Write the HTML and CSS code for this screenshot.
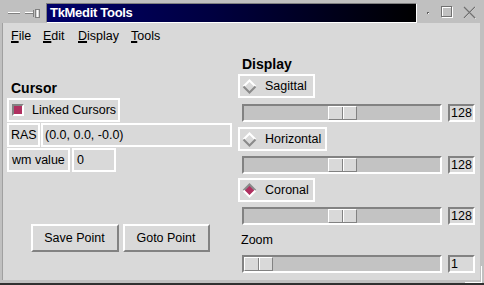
FILE: index.html
```html
<!DOCTYPE html>
<html>
<head>
<meta charset="utf-8">
<link rel="stylesheet" href="styles.css">
</head>
<body>
<div class="window">
  <div class="titlebar">
    <svg class="tb-left" width="46" height="23" viewBox="0 0 46 23">
      <line x1="8" y1="12.5" x2="20" y2="12.5" stroke="#ffffff" stroke-width="1"/>
      <line x1="8" y1="13.5" x2="20" y2="13.5" stroke="#808080" stroke-width="1"/>
      <line x1="25" y1="12.5" x2="33" y2="12.5" stroke="#ffffff" stroke-width="1"/>
      <line x1="25" y1="13.5" x2="33" y2="13.5" stroke="#808080" stroke-width="1"/>
      <line x1="33.5" y1="10" x2="33.5" y2="17" stroke="#808080" stroke-width="1"/>
      <rect x="35.5" y="9.5" width="4" height="8" fill="#d8d8d8" stroke="#808080" stroke-width="1"/>
      <line x1="37.5" y1="10" x2="37.5" y2="17" stroke="#ffffff" stroke-width="1"/>
    </svg>
    <div class="title">TkMedit Tools</div>
    <svg class="tb-right" width="67" height="23" viewBox="0 0 67 23">
      <rect x="10" y="12" width="2" height="2" fill="#606060"/>
      <rect x="11" y="13" width="1" height="1" fill="#ffffff"/>
      <rect x="25.5" y="7.5" width="10" height="10" fill="none" stroke="#ffffff" stroke-width="1"/>
      <rect x="24.5" y="6.5" width="10" height="10" fill="none" stroke="#707070" stroke-width="1"/>
      <path d="M47.5 7.5 L58.5 18.5 M58.5 7.5 L47.5 18.5" stroke="#ffffff" stroke-width="1"/>
      <path d="M47 7 L58 18 M58 7 L47 18" stroke="#707070" stroke-width="1.2"/>
    </svg>
  </div>
  <div class="client">
    <div class="menubar">
      <span class="menu"><span class="ul">F</span>ile</span>
      <span class="menu"><span class="ul">E</span>dit</span>
      <span class="menu"><span class="ul">D</span>isplay</span>
      <span class="menu"><span class="ul">T</span>ools</span>
    </div>
    <div class="main">
      <div class="left">
        <div class="heading cursor-head">Cursor</div>
        <div class="frame linked"><span class="check"></span><span class="check-label">Linked Cursors</span></div>
        <div class="row">
          <div class="frame f-ras">RAS</div>
          <div class="frame f-rasval">(0.0, 0.0, -0.0)</div>
        </div>
        <div class="row">
          <div class="frame f-wm">wm value</div>
          <div class="frame f-wmval">0</div>
        </div>
        <div class="buttons">
          <div class="btn btn-save">Save Point</div>
          <div class="btn btn-goto">Goto Point</div>
        </div>
      </div>
      <div class="right">
        <div class="heading display-head">Display</div>
        <div class="frame radio r-sag">
          <svg class="diamond" width="15" height="15" viewBox="0 0 15 15">
            <path d="M1.5 7.5 L7.5 1.5 L13.5 7.5" fill="none" stroke="#ffffff" stroke-width="2"/>
            <path d="M1.5 7.5 L7.5 13.5 L13.5 7.5" fill="none" stroke="#8a8a8a" stroke-width="2"/>
          </svg>
          <span>Sagittal</span>
        </div>
        <div class="slider-row">
          <div class="trough"><div class="thumb" style="margin-left:84px"></div></div>
          <div class="value">128</div>
        </div>
        <div class="frame radio r-hor">
          <svg class="diamond" width="15" height="15" viewBox="0 0 15 15">
            <path d="M1.5 7.5 L7.5 1.5 L13.5 7.5" fill="none" stroke="#ffffff" stroke-width="2"/>
            <path d="M1.5 7.5 L7.5 13.5 L13.5 7.5" fill="none" stroke="#8a8a8a" stroke-width="2"/>
          </svg>
          <span>Horizontal</span>
        </div>
        <div class="slider-row">
          <div class="trough"><div class="thumb" style="margin-left:84px"></div></div>
          <div class="value">128</div>
        </div>
        <div class="frame radio r-cor">
          <svg class="diamond" width="15" height="15" viewBox="0 0 15 15">
            <path d="M7.5 1.5 L13.5 7.5 L7.5 13.5 L1.5 7.5 Z" fill="#b03060"/>
            <path d="M1.5 7.5 L7.5 1.5 L13.5 7.5" fill="none" stroke="#8a8a8a" stroke-width="2"/>
            <path d="M1.5 7.5 L7.5 13.5 L13.5 7.5" fill="none" stroke="#ffffff" stroke-width="2"/>
          </svg>
          <span>Coronal</span>
        </div>
        <div class="slider-row">
          <div class="trough"><div class="thumb" style="margin-left:84px"></div></div>
          <div class="value">128</div>
        </div>
        <div class="zoom-label">Zoom</div>
        <div class="slider-row">
          <div class="trough"><div class="thumb" style="margin-left:0px"></div></div>
          <div class="value">1</div>
        </div>
      </div>
    </div>
  </div>
  <div class="grip"></div>
</div>
</body>
</html>
```

FILE: styles.css
```css
html, body {
  margin: 0;
  padding: 0;
  background: #c0c0c0;
}

.window {
  position: relative;
  width: 484px;
  height: 285px;
  background: #c0c0c0;
  display: flex;
  flex-direction: column;
  font-family: "Liberation Sans", Arial, sans-serif;
  font-size: 12.5px;
  line-height: 15px;
  color: #000;
  overflow: hidden;
}

/* ---------- title bar ---------- */
.titlebar {
  height: 23px;
  display: flex;
  align-items: flex-start;
  flex: none;
}

.tb-left, .tb-right {
  display: block;
  flex: none;
}

.title {
  margin-top: 3px;
  width: 371px;
  height: 20px;
  box-sizing: border-box;
  border: 1px solid;
  border-color: #808080 #ffffff #ffffff #808080;
  background: linear-gradient(to right, #00006a 0%, #000040 45%, #000000 100%);
  color: #ffffff;
  font-weight: bold;
  font-size: 13px;
  letter-spacing: -0.3px;
  line-height: 18px;
  padding-left: 3px;
  flex: none;
}

/* ---------- client area ---------- */
.client {
  flex: none;
  height: 257px;
  margin: 0 4px 0 2px;
  border-left: 1px solid #a0a0a0;
  background: #d9d9d9;
  display: flex;
  flex-direction: column;
}

.menubar {
  height: 25px;
  box-sizing: border-box;
  padding: 6px 0 0 8px;
  display: grid;
  grid-template-columns: 32px 35px 53px auto;
  flex: none;
}

.ul {
  text-decoration: underline;
  text-decoration-thickness: 2px;
  text-underline-offset: 1px;
}

.main {
  display: flex;
  align-items: flex-start;
}

.left {
  width: 225px;
  margin-left: 4px;
  display: flex;
  flex-direction: column;
}

.right {
  width: 237px;
  margin-left: 6px;
  display: flex;
  flex-direction: column;
}

.heading {
  font-weight: bold;
  font-size: 14px;
  line-height: 16px;
}

.cursor-head {
  margin-top: 32px;
  padding-left: 4px;
}

.display-head {
  margin-top: 8px;
  padding-left: 4px;
}

.frame {
  box-sizing: border-box;
  height: 24px;
  border: 2px solid #ffffff;
  display: flex;
  align-items: center;
}

.linked {
  width: 113px;
  margin-top: 2px;
}

.check {
  width: 12px;
  height: 12px;
  box-sizing: border-box;
  margin-left: 3px;
  border: 2px solid;
  border-color: #828282 #ffffff #ffffff #828282;
  background: #b03060;
  flex: none;
}

.check-label {
  margin-left: 8px;
}

.row {
  display: flex;
  margin-top: 1px;
}

.f-ras {
  width: 33px;
  padding-left: 2px;
}

.f-rasval {
  width: 191px;
  margin-left: 1px;
  padding-left: 2px;
}

.f-wm {
  width: 63px;
  padding-left: 3px;
}

.f-wmval {
  width: 44px;
  margin-left: 2px;
  padding-left: 3px;
}

.buttons {
  margin-top: 52px;
  display: flex;
  justify-content: center;
  gap: 4px;
  padding-left: 1px;
}

.btn {
  box-sizing: border-box;
  height: 28px;
  border: 2px solid;
  border-color: #ffffff #828282 #828282 #ffffff;
  background: #d9d9d9;
  display: flex;
  align-items: center;
  justify-content: center;
}

.btn-save { width: 88px; }
.btn-goto { width: 87px; }

/* ---------- display column ---------- */
.radio {
  margin-top: 2px;
  gap: 8px;
}

.r-sag { width: 77px; }
.r-hor { width: 89px; margin-top: 5px; }
.r-cor { width: 77px; margin-top: 4px; }

.diamond {
  display: block;
  margin-left: 2px;
  flex: none;
}

.slider-row {
  display: flex;
  margin-top: 5px;
  padding-left: 4px;
  gap: 6px;
}

.r-sag + .slider-row { margin-top: 6px; }

.trough {
  box-sizing: border-box;
  width: 200px;
  height: 18px;
  border: 2px solid;
  border-color: #828282 #ffffff #ffffff #828282;
  background: #c3c3c3;
  display: flex;
}

.thumb {
  position: relative;
  box-sizing: border-box;
  width: 29px;
  height: 14px;
  border: 1px solid;
  border-color: #ffffff #828282 #828282 #ffffff;
  background: #d9d9d9;
}

.thumb::after {
  content: "";
  position: absolute;
  left: 13px;
  top: 0;
  width: 1px;
  height: 12px;
  background: #828282;
  border-right: 1px solid #ffffff;
}

.value {
  box-sizing: border-box;
  width: 27px;
  height: 18px;
  border: 2px solid;
  border-color: #828282 #ffffff #ffffff #828282;
  padding-left: 1px;
  line-height: 14px;
}

.zoom-label {
  margin-top: 8px;
  padding-left: 3px;
}

.zoom-label + .slider-row {
  margin-top: 7px;
}

/* resize grip overlay in window corner */
.grip {
  position: absolute;
  right: 2px;
  bottom: 2px;
  width: 17px;
  height: 17px;
  border-right: 1px solid #ffffff;
  border-bottom: 1px solid #ffffff;
  box-sizing: border-box;
}

.window::after {
  content: "";
  position: absolute;
  left: 0;
  right: 0;
  bottom: 0;
  height: 2px;
  background: #303030;
}
```
